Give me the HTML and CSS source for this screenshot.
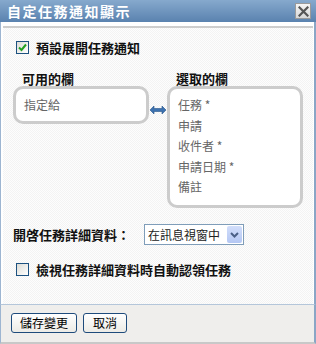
FILE: index.html
```html
<!DOCTYPE html>
<html lang="zh-Hant">
<head>
    <meta charset="UTF-8">
    <title>自定任務通知顯示</title>
    <link rel="stylesheet" href="styles.css">
</head>
<body>
    <div class="dialog">
        <div class="titlebar">
            <span class="title">自定任務通知顯示</span>
            <span class="close-btn">
                <svg width="11" height="11" viewBox="0 0 11 11">
                    <path d="M1.5 1.5 L9.5 9.5 M9.5 1.5 L1.5 9.5" stroke="#555" stroke-width="2.2" stroke-linecap="square"/>
                </svg>
            </span>
        </div>

        <div class="dialog-body">
            <div class="panel">
                <label class="check-row">
                    <span class="checkbox checked">
                        <svg width="9" height="9" viewBox="0 0 9 9">
                            <path d="M1 4.5 L3.5 7 L8 1.5" fill="none" stroke="#22a022" stroke-width="2"/>
                        </svg>
                    </span>
                    <span class="label">預設展開任務通知</span>
                </label>

                <div class="columns">
                    <div class="column">
                        <div class="col-title">可用的欄</div>
                        <div class="list-box small">
                            <div class="item">指定給</div>
                        </div>
                    </div>

                    <div class="swap-arrow">
                        <svg width="16" height="8" viewBox="0 0 16 8">
                            <polygon points="0,4 4,0 4,2.5 12,2.5 12,0 16,4 12,8 12,5.5 4,5.5 4,8" fill="#3d72b0" stroke="#27548a" stroke-width="0.6"/>
                        </svg>
                    </div>

                    <div class="column">
                        <div class="col-title">選取的欄</div>
                        <div class="list-box">
                            <div class="item">任務 *</div>
                            <div class="item">申請</div>
                            <div class="item">收件者 *</div>
                            <div class="item">申請日期 *</div>
                            <div class="item">備註</div>
                        </div>
                    </div>
                </div>

                <div class="select-row">
                    <span class="label">開啓任務詳細資料：</span>
                    <div class="select">
                        <span class="select-text">在訊息視窗中</span>
                        <span class="select-btn">
                            <svg width="9" height="6" viewBox="0 0 9 6">
                                <path d="M1 1 L4.5 4.5 L8 1" fill="none" stroke="#4a5f86" stroke-width="2"/>
                            </svg>
                        </span>
                    </div>
                </div>

                <label class="check-row second">
                    <span class="checkbox"></span>
                    <span class="label">檢視任務詳細資料時自動認領任務</span>
                </label>
            </div>
        </div>

        <div class="footer">
            <button class="btn save">儲存變更</button>
            <button class="btn cancel">取消</button>
        </div>
    </div>
</body>
</html>
```

FILE: styles.css
```css
body {
    margin: 0;
    font-family: "Noto Sans CJK TC", "Liberation Sans", sans-serif;
    background-color: #ffffff;
}

svg {
    display: block;
}

.dialog {
    width: 316px;
    height: 344px;
    display: flex;
    flex-direction: column;
}

.titlebar {
    height: 22px;
    background: linear-gradient(#86a9cd, #5a82af);
    display: flex;
    align-items: center;
    justify-content: space-between;
    padding: 0 5px 0 7px;
}

.title {
    color: white;
    font-size: 14px;
    font-weight: bold;
    letter-spacing: 1.5px;
    line-height: 22px;
}

.close-btn {
    width: 14px;
    height: 14px;
    border: 1px solid #9a9a9a;
    background: linear-gradient(#f4f4f4, #d8d8d8);
    display: flex;
    align-items: center;
    justify-content: center;
}

.dialog-body {
    flex: 1;
    display: flex;
    background-color: white;
    border-left: 1px solid #9db5d1;
    border-right: 2px solid #8aa6c6;
    padding: 4px 1px 0 2px;
}

.panel {
    flex: 1;
    border-top: 2px solid #cdcdcd;
    background: repeating-conic-gradient(#f3f3f3 0 25%, #fdfdfd 0 50%) 0 0 / 2px 2px;
    padding: 12px 0 0 10px;
}

.check-row {
    display: flex;
    align-items: center;
    gap: 7px;
    padding-left: 3px;
    height: 15px;
}

.check-row.second {
    margin-top: 17px;
}

.checkbox {
    width: 11px;
    height: 11px;
    border: 1px solid #1c5180;
    background: linear-gradient(135deg, #dcdcd6, #ffffff);
    display: flex;
    align-items: center;
    justify-content: center;
}

.label {
    font-size: 13px;
    font-weight: bold;
    color: #111;
    line-height: 15px;
}

.columns {
    display: flex;
    margin-top: 16px;
}

.col-title {
    font-size: 13px;
    font-weight: bold;
    color: #111;
    line-height: 15px;
    padding-left: 9px;
}

.list-box {
    width: 130px;
    height: 110px;
    border: 3px solid #cccccc;
    border-radius: 10px;
    background-color: white;
    padding-top: 6px;
    box-sizing: content-box;
}

.list-box.small {
    height: 26px;
    padding-top: 6px;
}

.item {
    font-size: 12px;
    color: #666666;
    line-height: 20.5px;
    padding-left: 8px;
}

.swap-arrow {
    margin: 35px 1px 0 1px;
    width: 16px;
    height: 8px;
}

.select-row {
    display: flex;
    align-items: center;
    margin-top: 16px;
    gap: 14px;
}

.select {
    height: 19px;
    border: 1px solid #7f9db9;
    background-color: white;
    display: flex;
    align-items: center;
    justify-content: space-between;
    padding: 0 1px 0 3px;
    box-sizing: content-box;
    width: 94px;
}

.select-text {
    font-size: 12px;
    color: #222;
}

.select-btn {
    width: 15px;
    height: 17px;
    background: linear-gradient(#d2defb, #b4c7f3);
    border-radius: 2px;
    display: flex;
    align-items: center;
    justify-content: center;
}

.footer {
    height: 20px;
    background-color: #efeeec;
    border-top: 1px solid #b4c6da;
    border-bottom: 2px solid #c8c8c8;
    border-left: 1px solid #9db5d1;
    border-right: 2px solid #8aa6c6;
    padding: 8px 0 9px 10px;
    display: flex;
    gap: 6px;
}

.btn {
    height: 20px;
    font-family: "Noto Sans CJK TC", sans-serif;
    font-size: 12px;
    color: #000;
    border: 1px solid #1e4b7c;
    border-radius: 3px;
    background: linear-gradient(#ffffff, #ecebe6);
    padding: 0;
    line-height: 18px;
}

.btn.save {
    width: 66px;
}

.btn.cancel {
    width: 44px;
}
```
